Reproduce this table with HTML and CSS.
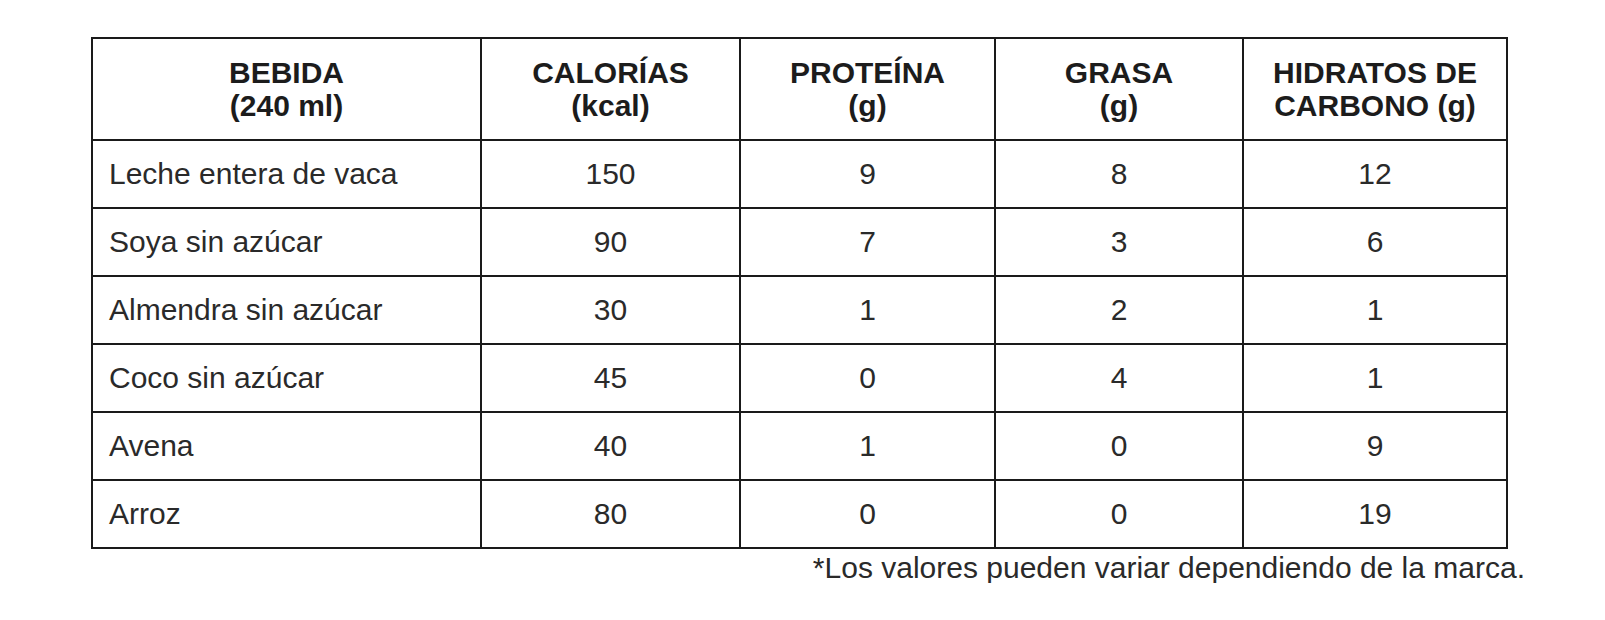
FILE: index.html
```html
<!DOCTYPE html>
<html lang="es">
<head>
<meta charset="utf-8">
<title>Bebidas</title>
<link rel="stylesheet" href="styles.css">
</head>
<body>
<div class="page">
  <table class="nutri">
    <colgroup>
      <col class="c1"><col class="c2"><col class="c3"><col class="c4"><col class="c5">
    </colgroup>
    <thead>
      <tr>
        <th>BEBIDA<br>(240 ml)</th>
        <th>CALORÍAS<br>(kcal)</th>
        <th>PROTEÍNA<br>(g)</th>
        <th>GRASA<br>(g)</th>
        <th>HIDRATOS DE<br>CARBONO (g)</th>
      </tr>
    </thead>
    <tbody>
      <tr><td class="name">Leche entera de vaca</td><td>150</td><td>9</td><td>8</td><td>12</td></tr>
      <tr><td class="name">Soya sin azúcar</td><td>90</td><td>7</td><td>3</td><td>6</td></tr>
      <tr><td class="name">Almendra sin azúcar</td><td>30</td><td>1</td><td>2</td><td>1</td></tr>
      <tr><td class="name">Coco sin azúcar</td><td>45</td><td>0</td><td>4</td><td>1</td></tr>
      <tr><td class="name">Avena</td><td>40</td><td>1</td><td>0</td><td>9</td></tr>
      <tr><td class="name">Arroz</td><td>80</td><td>0</td><td>0</td><td>19</td></tr>
    </tbody>
  </table>
  <p class="note">*Los valores pueden variar dependiendo de la marca.</p>
</div>
</body>
</html>
```
FILE: styles.css
```css
html, body {
  margin: 0;
  padding: 0;
  background: #ffffff;
}

body {
  font-family: "Liberation Sans", Arial, sans-serif;
  color: #2a2a2a;
}

.page {
  padding: 37px 0 0 91px;
  width: 1434px;
}

.nutri {
  border-collapse: collapse;
  table-layout: fixed;
  width: 1415px;
  font-size: 30px;
}

.c1 { width: 389px; }
.c2 { width: 259px; }
.c3 { width: 255px; }
.c4 { width: 248px; }
.c5 { width: 264px; }

.nutri th,
.nutri td {
  border: 2px solid #1a1a1a;
  padding: 0;
  text-align: center;
  vertical-align: middle;
}

.nutri th {
  height: 100px;
  font-weight: bold;
  line-height: 33px;
  color: #1c1c1c;
}

.nutri td {
  height: 66px;
  line-height: 34px;
}

.nutri td.name {
  text-align: left;
  padding-left: 16px;
}

.note {
  margin: 4px 0 0 0;
  font-size: 30px;
  line-height: 30px;
  text-align: right;
  color: #2a2a2a;
}
```
